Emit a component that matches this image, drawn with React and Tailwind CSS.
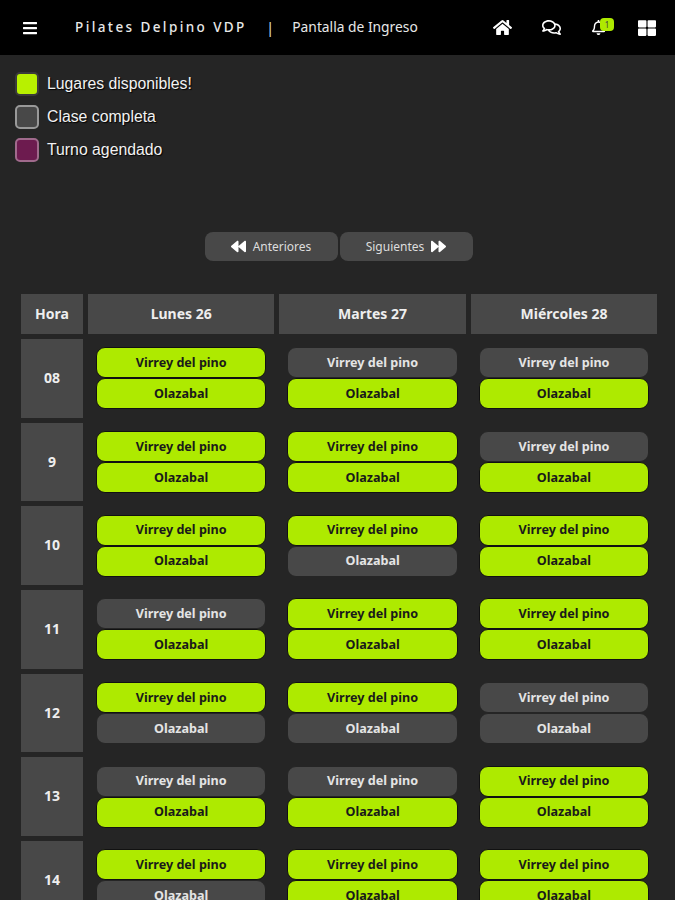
import { FaBars, FaHome, FaRegComments, FaRegBell, FaThLarge, FaBackward, FaForward } from 'react-icons/fa';

const days = ['Lunes 26', 'Martes 27', 'Miércoles 28'];

// 1 = lugares disponibles, 0 = clase completa (virrey, olazabal por dia)
const rows = [
  { hora: '08', slots: [[1, 1], [0, 1], [0, 1]] },
  { hora: '9', slots: [[1, 1], [1, 1], [0, 1]] },
  { hora: '10', slots: [[1, 1], [1, 0], [1, 1]] },
  { hora: '11', slots: [[0, 1], [1, 1], [1, 1]] },
  { hora: '12', slots: [[1, 0], [1, 0], [0, 0]] },
  { hora: '13', slots: [[0, 1], [0, 1], [1, 1]] },
  { hora: '14', slots: [[1, 0], [1, 1], [1, 1]] },
];

function Slot({ label, open }) {
  return (
    <button
      className={
        open
          ? 'h-[31px] w-full pt-[1px] rounded-[9px] bg-[#aeea00] border border-[#111] text-[12.6px] font-bold text-[#1a1a1a]'
          : 'h-[31px] w-full pt-[1px] rounded-[9px] bg-[#484848] border border-[#252525] text-[12.6px] font-bold text-[#e4e4e4]'
      }
    >
      {label}
    </button>
  );
}

function Legend({ color, border, children }) {
  return (
    <div className="flex items-center gap-[8px] h-[33px]">
      <span className={`w-[24px] h-[24px] rounded-[5px] border-2 ${color} ${border}`} />
      <span className="text-[15.8px] text-[#f2f2f2] font-['Liberation_Sans',sans-serif] [text-shadow:1px_1px_1px_#000]">
        {children}
      </span>
    </div>
  );
}

export default function App() {
  return (
    <div className="h-[900px] overflow-hidden bg-[#252525] font-['Noto_Sans',sans-serif]">
      <header className="h-[55px] bg-black flex items-center text-[#e8e8e8]">
        <FaBars className="ml-[22px] w-[16px] h-[16px] text-white" />
        <span className="ml-[37px] w-[170px] text-[13.5px] font-medium tracking-[2.4px] whitespace-nowrap">Pilates Delpino VDP</span>
        <span className="ml-[21px] text-[15px] text-[#dddddd]">|</span>
        <span className="ml-[18px] text-[13.8px] whitespace-nowrap">Pantalla de Ingreso</span>
        <div className="ml-auto flex items-center">
          <FaHome className="w-[19px] h-[19px] text-white mr-[30px]" />
          <FaRegComments className="w-[19px] h-[19px] text-white mr-[30px]" />
          <div className="relative mr-[27px] w-[20px]">
            <FaRegBell className="w-[15px] h-[15px] text-white" />
            <span className="absolute -top-[2px] left-[9px] w-[14px] h-[13px] rounded-[4px] bg-[#aeea00] text-[8px] leading-[13px] text-center text-[#444]">1</span>
          </div>
          <FaThLarge className="w-[18px] h-[18px] text-white mr-[19px]" />
        </div>
      </header>

      <div className="pt-[12px] pl-[15px]">
        <Legend color="bg-[#b8f000]" border="border-[#3a3a3a]">Lugares disponibles!</Legend>
        <Legend color="bg-[#484848]" border="border-[#999999]">Clase completa</Legend>
        <Legend color="bg-[#6d1b4f]" border="border-[#a06a8c]">Turno agendado</Legend>
      </div>

      <div className="mt-[66px] flex justify-center gap-[2px] pl-[2px]">
        <button className="w-[133px] h-[29px] rounded-[8px] bg-[#484848] flex items-center justify-center gap-[7px] text-[12px] text-[#dddddd]">
          <FaBackward className="w-[15px] h-[15px] text-white" />
          Anteriores
        </button>
        <button className="w-[133px] h-[29px] rounded-[8px] bg-[#484848] flex items-center justify-center gap-[7px] text-[12px] text-[#dddddd]">
          Siguientes
          <FaForward className="w-[15px] h-[15px] text-white" />
        </button>
      </div>

      <div className="mt-[33px] ml-[21px] grid grid-cols-[62px_186.4px_186.4px_186.4px] gap-x-[5px] gap-y-[5px] auto-rows-[78.7px] grid-rows-[40px]">
        <div className="bg-[#484848] flex items-center justify-center pb-[2px] text-[14px] font-bold text-[#eeeeee]">Hora</div>
        {days.map((d) => (
          <div key={d} className="bg-[#484848] flex items-center justify-center pb-[2px] text-[14px] font-bold text-[#eeeeee]">{d}</div>
        ))}
        {rows.map((r) => [
          <div key={r.hora} className="bg-[#484848] flex items-center justify-center pb-[2px] text-[14px] font-bold text-[#eeeeee]">{r.hora}</div>,
          ...r.slots.map((s, i) => (
            <div key={r.hora + i} className="flex flex-col justify-center px-[8px]">
              <Slot label="Virrey del pino" open={s[0] === 1} />
              <Slot label="Olazabal" open={s[1] === 1} />
            </div>
          )),
        ])}
      </div>
    </div>
  );
}
